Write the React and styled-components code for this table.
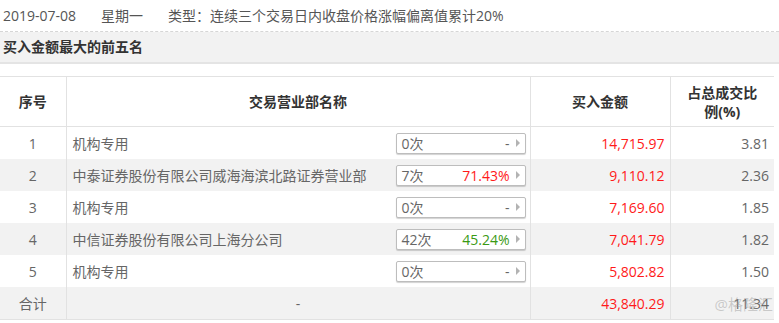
import React from "react";
import styled, { createGlobalStyle } from "styled-components";

const Global = createGlobalStyle`
  html, body { margin: 0; padding: 0; background: #fff; }
  body { font-family: "Open Sans", "Noto Sans CJK SC", sans-serif; font-size: 14px; color: #555; }
`;

const Page = styled.div`
  width: 779px;
  overflow: hidden;
`;

const InfoLine = styled.div`
  display: flex;
  gap: 25px;
  height: 31px;
  line-height: 31px;
  padding-left: 3px;
  color: #555;
  border-bottom: 1px dashed #d6d6d6;
  white-space: nowrap;
`;

const Section = styled.div`
  height: 30px;
  line-height: 30px;
  background: #f2f2f2;
  border-bottom: 2px solid #e4e4e4;
  padding-left: 3px;
  font-weight: bold;
  color: #333;
`;

const Table = styled.table`
  margin-top: 12px;
  width: 774px;
  border-collapse: collapse;
  table-layout: fixed;
  border-top: 1px solid #e2e2e2;
  border-bottom: 1px solid #e2e2e2;
`;

const Th = styled.th`
  height: 49px;
  padding: 0 ${(p) => (p.$wrap ? "12px" : "4px")};
  font-weight: bold;
  color: #333;
  line-height: 19px;
  text-align: center;
  border-right: 1px solid #e2e2e2;
  border-bottom: 1px solid #e2e2e2;
  &:last-child { border-right: none; }
`;

const Tr = styled.tr`
  background: ${(p) => (p.$alt ? "#f2f2f2" : "#fff")};
`;

const Td = styled.td`
  height: 32px;
  padding: ${(p) =>
    p.$align === "left" ? "0 4px 0 6px" : p.$align === "right" ? "0 5px" : "0"};
  text-align: ${(p) => p.$align || "center"};
  color: ${(p) => p.$color || "#666"};
  border-right: 1px solid #e2e2e2;
  white-space: nowrap;
  position: relative;
  &:last-child { border-right: none; }
`;

const NameCell = styled.div`
  display: flex;
  align-items: center;
  justify-content: space-between;
`;

const Badge = styled.div`
  box-sizing: border-box;
  width: 130px;
  height: 21px;
  display: flex;
  align-items: center;
  padding: 0 5px;
  border: 1px solid #bdbdbd;
  border-radius: 2px;
  background: #fff;
  box-shadow: 0 1px 1px rgba(0, 0, 0, 0.18);
  color: #666;
  line-height: 19px;
`;

const Count = styled.span`
  flex: 1;
`;

const Pct = styled.span`
  color: ${(p) => p.$color};
  margin-right: 6px;
`;

const Arrow = styled.span`
  width: 0;
  height: 0;
  border-top: 4px solid transparent;
  border-bottom: 4px solid transparent;
  border-left: 4px solid #b3b3b3;
`;

const Watermark = styled.span`
  position: absolute;
  right: 1px;
  top: 8px;
  font-size: 15px;
  color: rgba(150, 150, 150, 0.45);
  line-height: 18px;
`;

const RED = "#ff1a1a";
const GREEN = "#3a9a13";

const rows = [
  { n: 1, name: "机构专用", cnt: "0次", pct: "-", pc: "#666", amt: "14,715.97", ratio: "3.81" },
  { n: 2, name: "中泰证券股份有限公司威海海滨北路证券营业部", cnt: "7次", pct: "71.43%", pc: RED, amt: "9,110.12", ratio: "2.36" },
  { n: 3, name: "机构专用", cnt: "0次", pct: "-", pc: "#666", amt: "7,169.60", ratio: "1.85" },
  { n: 4, name: "中信证券股份有限公司上海分公司", cnt: "42次", pct: "45.24%", pc: GREEN, amt: "7,041.79", ratio: "1.82" },
  { n: 5, name: "机构专用", cnt: "0次", pct: "-", pc: "#666", amt: "5,802.82", ratio: "1.50" },
];

export default function App() {
  return (
    <Page>
      <Global />
      <InfoLine>
        <span>2019-07-08</span>
        <span>星期一</span>
        <span>类型：连续三个交易日内收盘价格涨幅偏离值累计20%</span>
      </InfoLine>
      <Section>买入金额最大的前五名</Section>
      <Table>
        <colgroup>
          <col style={{ width: 66 }} />
          <col style={{ width: 464 }} />
          <col style={{ width: 140 }} />
          <col style={{ width: 104 }} />
        </colgroup>
        <thead>
          <tr>
            <Th>序号</Th>
            <Th>交易营业部名称</Th>
            <Th>买入金额</Th>
            <Th $wrap>占总成交比例(%)</Th>
          </tr>
        </thead>
        <tbody>
          {rows.map((r, i) => (
            <Tr key={r.n} $alt={i % 2 === 1}>
              <Td>{r.n}</Td>
              <Td $align="left">
                <NameCell>
                  <span>{r.name}</span>
                  <Badge>
                    <Count>{r.cnt}</Count>
                    <Pct $color={r.pc}>{r.pct}</Pct>
                    <Arrow />
                  </Badge>
                </NameCell>
              </Td>
              <Td $align="right" $color={RED}>{r.amt}</Td>
              <Td $align="right">{r.ratio}</Td>
            </Tr>
          ))}
          <Tr $alt>
            <Td>合计</Td>
            <Td>-</Td>
            <Td $align="right" $color={RED}>43,840.29</Td>
            <Td $align="right">
              11.34
              <Watermark>@格隆汇</Watermark>
            </Td>
          </Tr>
        </tbody>
      </Table>
    </Page>
  );
}
